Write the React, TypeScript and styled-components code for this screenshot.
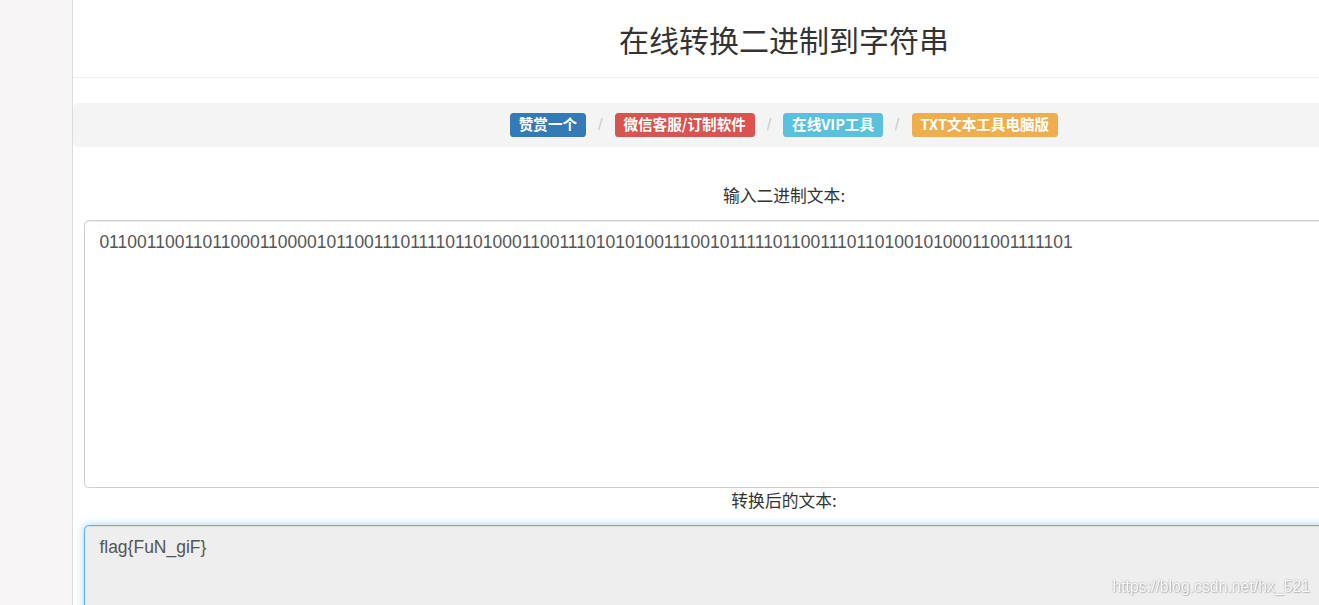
import styled, { createGlobalStyle } from "styled-components";

const GlobalStyle = createGlobalStyle`
    html, body {
        margin: 0;
        padding: 0;
        overflow: hidden;
        background: #ffffff;
    }
    body {
        font-family: "Liberation Sans", "Noto Sans CJK SC", sans-serif;
        font-size: 16.8px;
        color: #333333;
    }
`;

const Page = styled.div`
    display: flex;
    width: 1495px;
    min-height: 605px;
`;

const Sidebar = styled.div`
    width: 72px;
    flex-shrink: 0;
    background-color: #f6f4f4;
    border-right: 1px solid #dcdcdc;
`;

const Main = styled.div`
    flex: 1;
    display: flex;
    flex-direction: column;
    background: #ffffff;

    & > * {
        flex-shrink: 0;
    }
`;

const Header = styled.div`
    height: 77px;
    display: flex;
    align-items: center;
    justify-content: center;
    border-bottom: 1px solid #eeeeee;
`;

const Title = styled.h1`
    margin: 0;
    font-size: 30px;
    font-weight: 400;
    color: #333333;
    font-family: "Noto Sans CJK SC", sans-serif;
`;

const Breadcrumb = styled.ol`
    list-style: none;
    margin: 25px 0 36px;
    padding: 10px 18px;
    background-color: #f4f4f4;
    border-radius: 4.8px;
    display: flex;
    justify-content: center;
    align-items: center;
    line-height: 24px;
`;

const Crumb = styled.li`
    display: flex;
    align-items: center;

    & + &::before {
        content: "/";
        color: #cccccc;
        padding: 0 12px;
        font-size: 16.8px;
    }
`;

const Badge = styled.span<{ $color: string }>`
    display: inline-block;
    background-color: ${(p) => p.$color};
    color: #ffffff;
    font-family: "Noto Sans CJK SC", sans-serif;
    font-size: 14.6px;
    font-weight: 700;
    line-height: 1;
    padding: 4px 8.8px 5px;
    border-radius: 3.6px;
    white-space: nowrap;
`;

const Form = styled.div`
    display: flex;
    flex-direction: column;
    padding: 0 11px;
`;

const Label = styled.label<{ $gap?: number }>`
    display: block;
    text-align: center;
    font-family: "Noto Sans CJK SC", sans-serif;
    font-size: 16.8px;
    line-height: 24px;
    color: #333333;
    margin-bottom: ${(p) => p.$gap ?? 13}px;
`;

const TextArea = styled.textarea<{ $readonly?: boolean }>`
    display: block;
    box-sizing: border-box;
    width: 100%;
    height: 268px;
    padding: 9px 14.4px 7px;
    font-family: "Liberation Sans", "Noto Sans CJK SC", sans-serif;
    font-size: 17.5px;
    line-height: 24px;
    color: #555555;
    resize: none;
    outline: none;
    border-radius: 4.8px;
    background-color: ${(p) => (p.$readonly ? "#eeeeee" : "#ffffff")};
    border: 1px solid ${(p) => (p.$readonly ? "#66afe9" : "#cccccc")};
    box-shadow: ${(p) =>
        p.$readonly
            ? "inset 0 1px 1px rgba(0,0,0,.075), 0 0 9px rgba(102,175,233,.6)"
            : "inset 0 1px 1px rgba(0,0,0,.075)"};
`;

const Watermark = styled.div`
    position: fixed;
    right: 9px;
    bottom: 9px;
    font-family: "Liberation Sans", sans-serif;
    font-size: 15.8px;
    color: rgba(255, 255, 255, 0.9);
    text-shadow: 0 0 2px rgba(0, 0, 0, 0.35), 1px 1px 1px rgba(0, 0, 0, 0.15);
    pointer-events: none;
`;

const badges = [
    { text: "赞赏一个", color: "#337ab7" },
    { text: "微信客服/订制软件", color: "#d9534f" },
    { text: "在线VIP工具", color: "#5bc0de" },
    { text: "TXT文本工具电脑版", color: "#f0ad4e" },
];

const binary =
    "01100110011011000110000101100111011110110100011001110101010011100101111101100111011010010100011001111101";

export default function App() {
    return (
        <>
            <GlobalStyle />
            <Page>
                <Sidebar />
                <Main>
                    <Header>
                        <Title>在线转换二进制到字符串</Title>
                    </Header>
                    <Breadcrumb>
                        {badges.map((b) => (
                            <Crumb key={b.text}>
                                <Badge $color={b.color}>{b.text}</Badge>
                            </Crumb>
                        ))}
                    </Breadcrumb>
                    <Form>
                        <Label>输入二进制文本:</Label>
                        <TextArea defaultValue={binary} />
                        <Label>转换后的文本:</Label>
                        <TextArea $readonly readOnly defaultValue="flag{FuN_giF}" />
                    </Form>
                </Main>
            </Page>
            <Watermark>https://blog.csdn.net/hx_521</Watermark>
        </>
    );
}
